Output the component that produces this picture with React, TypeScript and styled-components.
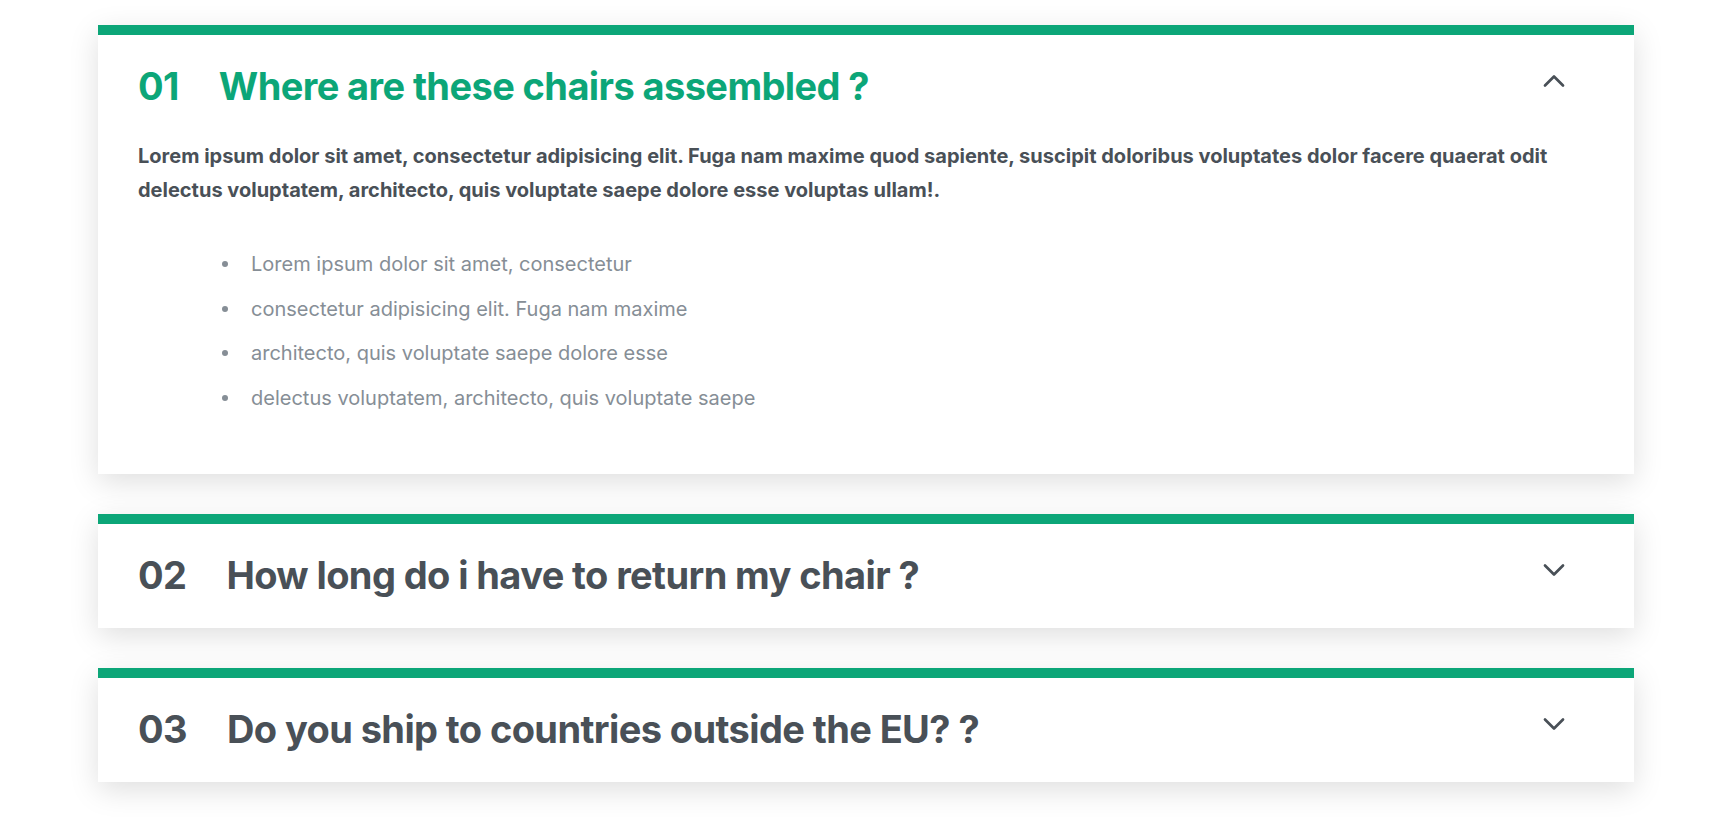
import React, { useState } from "react";
import styled, { createGlobalStyle } from "styled-components";
import { ChevronDown, ChevronUp } from "lucide-react";

const GlobalStyle = createGlobalStyle`
  * { box-sizing: border-box; }
  html, body { margin: 0; padding: 0; background: #ffffff; }
  body { font-family: Inter, "Noto Sans", sans-serif; color: #495057; }
`;

const Page = styled.main`
  padding: 25px 0 40px;
`;

const Accordion = styled.div`
  max-width: 1536px;
  margin: 0 auto;
  display: flex;
  flex-direction: column;
  gap: 40px;
`;

const Item = styled.article`
  background: #fff;
  border-top: 10px solid #0ca678;
  box-shadow: 0 8px 28px rgba(0, 0, 0, 0.13);
`;

const Header = styled.button<{ $open: boolean }>`
  all: unset;
  box-sizing: border-box;
  width: 100%;
  display: flex;
  align-items: flex-start;
  padding: 28px 62px 30px 40px;
  cursor: pointer;
  color: ${(p) => (p.$open ? "#0ca678" : "#495057")};
  font-family: Inter, sans-serif;
  font-size: 38px;
  font-weight: 700;
  line-height: 46px;
  letter-spacing: -0.6px;
`;

const Number = styled.span`
  margin-right: 40px;
`;

const Title = styled.span`
  flex: 1;
`;

const Icon = styled.span`
  display: flex;
  color: #495057;
`;

const Body = styled.div`
  padding: 0 40px 47px;
`;

const Text = styled.p`
  margin: 0;
  font-size: 20px;
  line-height: 34px;
  font-weight: 700;
  color: #495057;
`;

const List = styled.ul`
  list-style: none;
  margin: 42px 0 0;
  padding: 0 0 0 84px;
`;

const ListItem = styled.li`
  display: flex;
  align-items: center;
  font-size: 20px;
  line-height: 30px;
  color: #868e96;
  margin-bottom: 14.5px;

  &::before {
    content: "";
    width: 6px;
    height: 6px;
    border-radius: 50%;
    background: #868e96;
    margin-right: 23px;
    flex-shrink: 0;
  }
`;

const items = [
  {
    num: "01",
    title: "Where are these chairs assembled ?",
  },
  {
    num: "02",
    title: "How long do i have to return my chair ?",
  },
  {
    num: "03",
    title: "Do you ship to countries outside the EU? ?",
  },
];

const bullets = [
  "Lorem ipsum dolor sit amet, consectetur",
  "consectetur adipisicing elit. Fuga nam maxime",
  "architecto, quis voluptate saepe dolore esse",
  "delectus voluptatem, architecto, quis voluptate saepe",
];

export default function App() {
  const [open, setOpen] = useState<number | null>(0);
  return (
    <>
      <GlobalStyle />
      <Page>
        <Accordion>
          {items.map((it, i) => {
            const isOpen = open === i;
            return (
              <Item key={it.num}>
                <Header $open={isOpen} onClick={() => setOpen(isOpen ? null : i)}>
                  <Number>{it.num}</Number>
                  <Title>{it.title}</Title>
                  <Icon>
                    {isOpen ? (
                      <ChevronUp size={36} strokeWidth={1.8} />
                    ) : (
                      <ChevronDown size={36} strokeWidth={1.8} />
                    )}
                  </Icon>
                </Header>
                {isOpen && (
                  <Body>
                    <Text>
                      Lorem ipsum dolor sit amet, consectetur adipisicing elit. Fuga nam maxime
                      quod sapiente, suscipit doloribus voluptates dolor facere quaerat odit
                      delectus voluptatem, architecto, quis voluptate saepe dolore esse voluptas
                      ullam!.
                    </Text>
                    <List>
                      {bullets.map((b) => (
                        <ListItem key={b}>{b}</ListItem>
                      ))}
                    </List>
                  </Body>
                )}
              </Item>
            );
          })}
        </Accordion>
      </Page>
    </>
  );
}
